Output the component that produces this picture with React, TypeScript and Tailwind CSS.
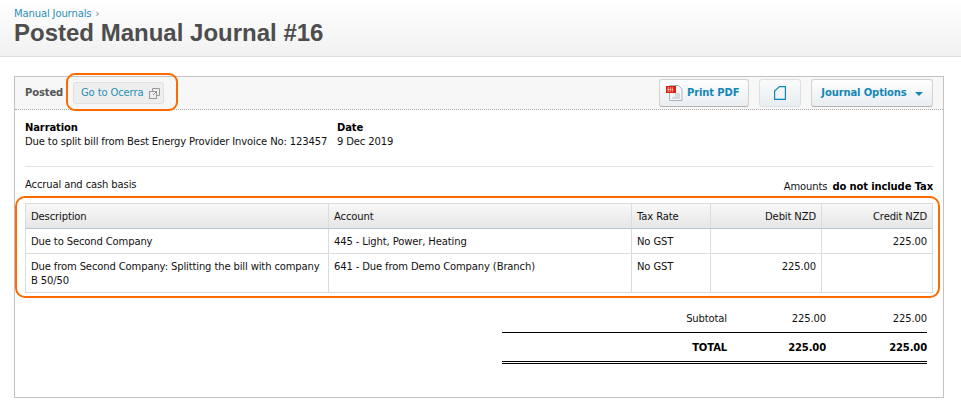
function ExternalIcon() {
  return (
    <svg width="11" height="11" viewBox="0 0 11 11" fill="none" stroke="#999" strokeWidth="1">
      <path d="M3.500 3.500V.5h7v7h-3" />
      <rect x=".5" y="3.500" width="7" height="7" />
      <path d="M4 7l3-3M5 3.500h2.500V6" />
    </svg>
  )
}

function PdfIcon() {
  return (
    <svg width="17" height="16" viewBox="0 0 17 16">
      <path d="M3.500.5h9l3.500 3.500v11.500h-12.500z" fill="#f4f6f8" stroke="#aab4bd" />
      <path d="M9 9h5M9 11h5M6 13h8" stroke="#b5bec6" />
      <rect x="0" y="1" width="10" height="7" fill="#d8200c" />
      <path d="M1.500 3h6M1.500 4.500h6M1.500 6h6" stroke="#fff" strokeWidth=".8" strokeDasharray="1.500 .6" />
    </svg>
  )
}

function DocIcon() {
  return (
    <svg width="12" height="14" viewBox="0 0 12 14" fill="none" stroke="#0b86b8" strokeWidth="1.200">
      <path d="M.6 13.400V5L5.500.6h5.900v12.800z" />
    </svg>
  )
}

const rows = [
  { desc: 'Due to Second Company', account: '445 - Light, Power, Heating', tax: 'No GST', debit: '', credit: '225.00', h: 'h-[24px]' },
  { desc: 'Due from Second Company: Splitting the bill with company B 50/50', account: '641 - Due from Demo Company (Branch)', tax: 'No GST', debit: '225.00', credit: '', h: 'h-[39px]' },
]

const GRID = 'grid grid-cols-[303px_303px_79px_111px_1fr]'

export default function App() {
  return (
    <div className="relative h-[413px] w-[961px] overflow-hidden bg-white font-['DejaVu_Sans',sans-serif] text-[10px] leading-[14px] tracking-[-0.13px] text-[#111]">
      {/* Header */}
      <div className="h-[57px] border-b border-[#dedede] bg-gradient-to-b from-white to-[#f1f1f1] pl-[14px] pt-[7px]">
        <div className="flex h-[14px] items-center gap-1 text-[#2a8fb8]">
          <span>Manual Journals</span>
          <span className="text-[#777]">›</span>
        </div>
        <h1 className="-mt-[2px] font-['Liberation_Sans',sans-serif] text-[24px] font-bold leading-[27px] tracking-normal text-[#4d4d4d]">Posted Manual Journal #16</h1>
      </div>

      {/* Panel */}
      <div className="ml-[14px] mt-[19px] h-[322px] w-[930px] border border-[#c3c3c3]">
        <div className="flex h-[33px] items-center justify-between border-b border-dotted border-[#aaa] bg-[#f7f7f7] px-[10px]">
          <div className="flex items-center gap-[10px]">
            <span className="w-[38px] font-bold text-[#555]">Posted</span>
            <div className="flex h-[22px] w-[91px] items-center justify-between whitespace-nowrap rounded-[3px] border border-[#e0e0e0] bg-[#eeeeee] pl-[7px] pr-[3px] text-[#2a8fb8]">
              Go to Ocerra
              <ExternalIcon />
            </div>
          </div>
          <div className="flex items-center gap-[10px] font-bold text-[#1487b8]">
            <button className="flex h-[28px] w-[90px] items-center gap-[4px] whitespace-nowrap rounded-[3px] border border-[#d2d2d2] border-b-[#b5b5b5] bg-gradient-to-b from-white to-[#e9edf0] pl-[6px]">
              <PdfIcon />
              Print PDF
            </button>
            <button className="flex h-[28px] w-[42px] items-center justify-center rounded-[3px] border border-[#dbe0e3] bg-gradient-to-b from-[#fafbfb] to-[#e8eef1]">
              <DocIcon />
            </button>
            <button className="flex h-[28px] w-[122px] items-center justify-center gap-[8px] whitespace-nowrap rounded-[3px] border border-[#d2d2d2] border-b-[#b5b5b5] bg-gradient-to-b from-white to-[#e9edf0]">
              Journal Options
              <span className="mt-[2px] h-0 w-0 border-x-[4px] border-t-[4px] border-x-transparent border-t-[#1487b8]" />
            </button>
          </div>
        </div>

        <div className="px-[10px]">
          {/* Narration and date */}
          <div className="flex h-[57px] items-start gap-[10px] border-b border-[#e2e2e2] pt-[11px]">
            <div className="w-[302px] whitespace-nowrap">
              <div className="font-bold text-black">Narration</div>
              <div>Due to split bill from Best Energy Provider Invoice No: 123457</div>
            </div>
            <div>
              <div className="font-bold text-black">Date</div>
              <div>9 Dec 2019</div>
            </div>
          </div>

          <div className="flex h-[36px] items-start justify-between">
            <span className="mt-[11px]">Accrual and cash basis</span>
            <span className="mt-[13px]">
              Amounts <span className="ml-[2px] font-bold text-black">do not include Tax</span>
            </span>
          </div>

          {/* Lines */}
          <div className="border border-[#dcdcdc]">
            <div className={`${GRID} h-[25px] border-b border-[#bcc5cf] bg-gradient-to-b from-[#f8f8f8] to-[#e6e6e6]`}>
              <div className="flex items-center border-r border-[#dcdcdc] px-[5px] pt-[1px]">Description</div>
              <div className="flex items-center border-r border-[#dcdcdc] px-[5px] pt-[1px]">Account</div>
              <div className="flex items-center border-r border-[#dcdcdc] px-[5px] pt-[1px]">Tax Rate</div>
              <div className="flex items-center justify-end border-r border-[#dcdcdc] px-[5px] pt-[1px]">Debit NZD</div>
              <div className="flex items-center justify-end px-[5px] pt-[1px]">Credit NZD</div>
            </div>
            {rows.map((r, i) => (
              <div key={i} className={`${GRID} ${r.h} ${i > 0 ? 'border-t border-[#dcdcdc]' : ''}`}>
                <div className="border-r border-[#dcdcdc] px-[5px] pt-[6px]">{r.desc}</div>
                <div className="border-r border-[#dcdcdc] px-[5px] pt-[6px]">{r.account}</div>
                <div className="border-r border-[#dcdcdc] px-[5px] pt-[6px]">{r.tax}</div>
                <div className="border-r border-[#dcdcdc] px-[5px] pt-[6px] text-right">{r.debit}</div>
                <div className="px-[5px] pt-[6px] text-right">{r.credit}</div>
              </div>
            ))}
          </div>

          {/* Totals */}
          <div className="ml-[477px] mt-[19px] w-[425px]">
            <div className="grid h-[21px] grid-cols-[225px_99px_1fr] border-b border-black text-right">
              <span>Subtotal</span>
              <span>225.00</span>
              <span>225.00</span>
            </div>
            <div className="grid h-[31px] grid-cols-[225px_99px_1fr] items-center border-b-[3px] border-double border-black pt-[2px] text-right font-bold text-black">
              <span>TOTAL</span>
              <span>225.00</span>
              <span>225.00</span>
            </div>
          </div>
        </div>
      </div>

      {/* Orange callouts */}
      <div className="absolute left-[66px] top-[73px] h-[38px] w-[112px] rounded-[9px] border-2 border-[#ff6a00]" />
      <div className="absolute left-[15px] top-[196px] h-[102px] w-[925px] rounded-[10px] border-2 border-[#ff6a00]" />
    </div>
  )
}
